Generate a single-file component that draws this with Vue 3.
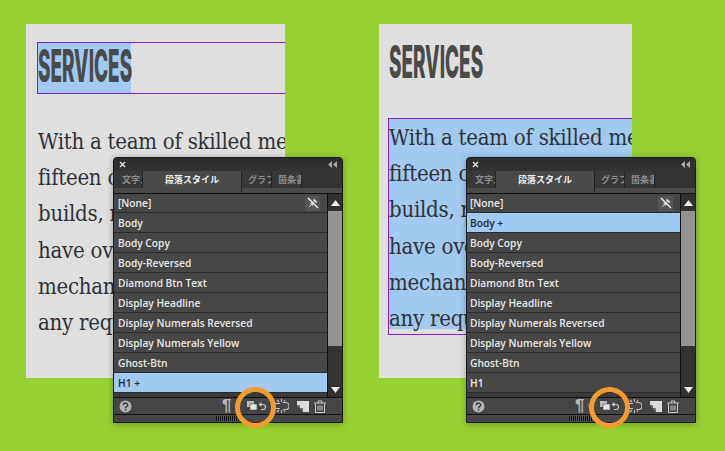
<script setup>
const lines = ['With a team of skilled mechanics', 'fifteen c', 'builds, r', 'have ove', 'mechan', 'any requ']
const base = ['Body', 'Body Copy', 'Body-Reversed', 'Diamond Btn Text', 'Display Headline', 'Display Numerals Reversed', 'Display Numerals Yellow', 'Ghost-Btn', 'H1']
const scenes = [
  { id: 'a', sel: 'H1', mod: 'H1 +' },
  { id: 'b', sel: 'Body', mod: 'Body +' }
]
const rowsFor = s => base.map(n => ({ label: n === s.sel ? s.mod : n, active: n === s.sel }))
</script>

<template>
  <div class="stage">
    <section v-for="s in scenes" :key="s.id" class="scene" :class="'scene-' + s.id">
      <div class="page">
        <div class="head-frame">
          <div class="head-sel"><h1 class="head">SERVICES</h1></div>
        </div>
        <div class="body-frame">
          <div class="body-sel">
            <p v-for="l in lines" :key="l" class="line">{{ l }}</p>
          </div>
        </div>
      </div>

      <div class="panel">
        <div class="titlebar">
          <svg width="7" height="7" viewBox="0 0 7 7"><path d="M1 1l5 5M6 1L1 6" stroke="#ddd" stroke-width="1.5"/></svg>
          <svg width="9" height="7" viewBox="0 0 9 7"><path d="M4 0v7L0 3.500zM9 0v7L5 3.500z" fill="#aaa"/></svg>
        </div>
        <div class="tabs">
          <span class="tab t1">文字ス</span>
          <span class="tab active">段落スタイル</span>
          <span class="tab t3">グラフ</span>
          <span class="tab t4">箇条書</span>
        </div>
        <div class="strip"></div>
        <div class="content">
          <ul class="list">
            <li class="row">
              <span>[None]</span>
              <span class="pin">
                <svg width="14" height="14" viewBox="0 0 14 14"><path d="M8 2.500l3.500 3.500-2 1-2.500-2.500zM7 6l-3 1.500 2.500 2.500L8 7" fill="#d8d8d8"/><path d="M2 2l10 10" stroke="#eee" stroke-width="1.400"/><path d="M3 11l2-2" stroke="#ccc"/></svg>
              </span>
            </li>
            <li v-for="r in rowsFor(s)" :key="r.label" class="row" :class="{ on: r.active }">{{ r.label }}</li>
          </ul>
          <div class="scroll">
            <div class="btn"><svg width="9" height="6" viewBox="0 0 9 6"><path d="M4.500 0L9 6H0z" fill="#eee"/></svg></div>
            <div class="thumb"></div>
            <div class="btn end"><svg width="9" height="6" viewBox="0 0 9 6"><path d="M4.500 6L9 0H0z" fill="#eee"/></svg></div>
          </div>
        </div>
        <div class="footer">
          <svg class="ic help" width="13" height="13" viewBox="0 0 13 13"><circle cx="6.500" cy="6.500" r="6" fill="#b4b4b4"/><path d="M4.300 5.200c0-3 4.400-2.800 4.400-.3 0 1.500-2.100 1.500-2.100 3" fill="none" stroke="#3b3b3b" stroke-width="1.500"/><rect x="5.800" y="8.800" width="1.600" height="1.700" fill="#3b3b3b"/></svg>
          <span class="pilcrow">¶</span>
          <span class="plus">+</span>
          <svg class="ic clear" width="19" height="10" viewBox="0 0 19 10"><rect x="0" y="0" width="7" height="6" fill="#bbb"/><rect x="3" y="3" width="7" height="6" fill="#e6e6e6" stroke="#444" stroke-width=".6"/><path d="M13 3.500h3a2.500 2.500 0 010 5h-2" fill="none" stroke="#ccc" stroke-width="1.100"/><path d="M14.500 1L11.500 3.500 14.500 6z" fill="#ccc"/></svg>
          <svg class="ic brk" width="14" height="14" viewBox="0 0 14 14"><path d="M0 4.500h5M0 9.500h5M8 3.500h2.500a3.500 3.500 0 010 7H8M6.500 0v3M6.500 11v3M2 1l2 2M2 13l2-2M10 1L9 2.500M10 13l-1-1.500" fill="none" stroke="#c4c4c4" stroke-width="1.100"/></svg>
          <svg class="ic new" width="12" height="11" viewBox="0 0 12 11"><path d="M0 0h12v11H6V7H3V4H0z" fill="#dcdcdc"/><path d="M0 4h3v3h3v4z" fill="#777"/></svg>
          <svg class="ic trash" width="12" height="13" viewBox="0 0 12 13"><path d="M0 3h12M4 3V1h4v2M1.500 3.500V12.500h9V3.500M4 5.500v5M6 5.500v5M8 5.500v5" fill="none" stroke="#c8c8c8" stroke-width="1"/></svg>
        </div>
        <div class="grip"><i></i></div>
      </div>

      <div class="ring"></div>
    </section>
  </div>
</template>

<style>
html, body { margin: 0; background: #98d033; }
</style>

<style scoped>
.stage {
  display: flex;
  width: 725px;
  height: 451px;
  padding: 24px 0 0 26px;
  box-sizing: border-box;
  background: #98d033;
  overflow: hidden;
}
.scene { position: relative; height: 354px; flex: none; }
.scene-a { width: 353px; }
.scene-b { width: 320px; }
.page {
  height: 354px;
  background: #dfdfdf;
  overflow: hidden;
  box-sizing: border-box;
}
.scene-a .page { width: 259px; padding: 18px 0 0 11px; }
.scene-b .page { width: 253px; padding: 14px 0 0 9px; }

.head-frame { height: 52px; box-sizing: border-box; }
.scene-a .head-frame { border: 1px solid #8a20c8; border-right: 0; }
.scene-b .head-frame { border: 1px solid transparent; }
.head-sel { width: 93px; height: 50px; display: flex; align-items: center; }
.scene-a .head-sel { background: #a2c9f2; }
.head {
  margin: -4px 0 0;
  font: 800 45px/50px Inter, "Liberation Sans", sans-serif;
  color: #4a4a4a;
  white-space: nowrap;
  transform: scaleX(.42);
  transform-origin: left center;
}
.body-frame {
  margin-top: 28px;
  height: 217px;
  box-sizing: border-box;
  border: 1px solid transparent;
  border-right: 0;
}
.scene-b .body-frame { border-color: #8a20c8; }
.body-sel { height: 210px; padding-top: 1px; box-sizing: border-box; }
.scene-b .body-sel { background: #a2c9f2; }
.line {
  margin: 0;
  font: 400 22px/36.2px "DejaVu Serif Condensed", "DejaVu Serif", serif;
  font-stretch: condensed;
  letter-spacing: -.25px;
  color: #2f3238;
  white-space: nowrap;
}

.panel {
  position: absolute;
  top: 133px;
  left: 87px;
  width: 230px;
  height: 266px;
  box-sizing: border-box;
  background: #3a3a3a;
  border: 1px solid #1d1d1d;
  border-radius: 4px 4px 0 0;
  box-shadow: 0 1px 6px rgba(0, 0, 0, .3);
  overflow: hidden;
}
.titlebar {
  height: 13px;
  background: linear-gradient(#2b2b2b, #333);
  display: flex;
  justify-content: space-between;
  align-items: center;
  padding: 0 5px;
}
.tabs {
  height: 17px;
  display: flex;
  background: #333;
  font: 700 9px/17px "Noto Sans CJK JP", sans-serif;
}
.tab {
  display: block;
  overflow: hidden;
  white-space: nowrap;
  color: #8d8d8d;
  box-sizing: border-box;
  border-right: 1px solid #262626;
  background: #383838;
}
.t1 { width: 29px; padding-left: 8px; }
.active { width: 99px; background: #4a4a4a; color: #eee; text-align: center; height: 21px; border-right-color: #222; }
.t3 { width: 30px; padding-left: 6px; }
.t4 { width: 30px; padding-left: 6px; }
.strip { height: 5px; background: #4a4a4a; border-bottom: 1px solid #111; }
.content { display: flex; height: 203px; border-bottom: 1px solid #111; }
.list { list-style: none; margin: 0; padding: 0; width: 213px; border-right: 1px solid #111; flex: none; }
.row {
  height: 20px;
  box-sizing: border-box;
  border-bottom: 1px solid #2b2b2b;
  background: #474747;
  color: #e8e8e8;
  font: 600 10.2px/18px "Open Sans", sans-serif;
  padding-left: 4px;
  display: flex;
  align-items: center;
  justify-content: space-between;
}
.scene-b .row { padding-left: 3px; }
.row:first-child { height: 19px; }
.row.on { background: #a2c9f2; color: #1f2a3a; }
.pin { display: flex; align-items: center; justify-content: center; width: 15px; height: 15px; background: #555; margin-right: 7px; }
.scroll { flex: 1; background: #333; display: flex; flex-direction: column; }
.btn { height: 17px; display: flex; align-items: center; justify-content: center; background: #303030; }
.thumb { height: 135px; background: #939393; }
.btn.end { margin-top: auto; height: 14px; }
.footer {
  height: 16px;
  background: #454545;
  border-bottom: 1px solid #111;
  display: flex;
  align-items: center;
  color: #bbb;
}
.ic { flex: none; }
.help { margin-left: 5px; }
.pilcrow { margin-left: 90px; font: 700 17px/16px "Liberation Sans", sans-serif; width: 10px; color: #b8b8b8; }
.plus { font: 400 9px/16px "Liberation Sans", sans-serif; width: 8px; color: #777; margin-left: 1px; }
.clear { margin-left: 6px; }
.brk { margin-left: 9px; }
.new { margin-left: 8px; }
.trash { margin-left: 5px; }
.grip { height: 7px; background: #474747; display: flex; justify-content: center; align-items: center; }
.grip i {
  display: block;
  width: 24px;
  height: 5px;
  margin-left: -1px;
  background: repeating-linear-gradient(90deg, #111 0 1px, #555 1px 2px);
}

.ring {
  position: absolute;
  top: 363px;
  width: 41px;
  height: 41px;
  box-sizing: border-box;
  border: 5px solid #f49a2e;
  border-radius: 50%;
}
.scene-a .ring { left: 209px; }
.scene-b .ring { left: 210px; }
</style>
